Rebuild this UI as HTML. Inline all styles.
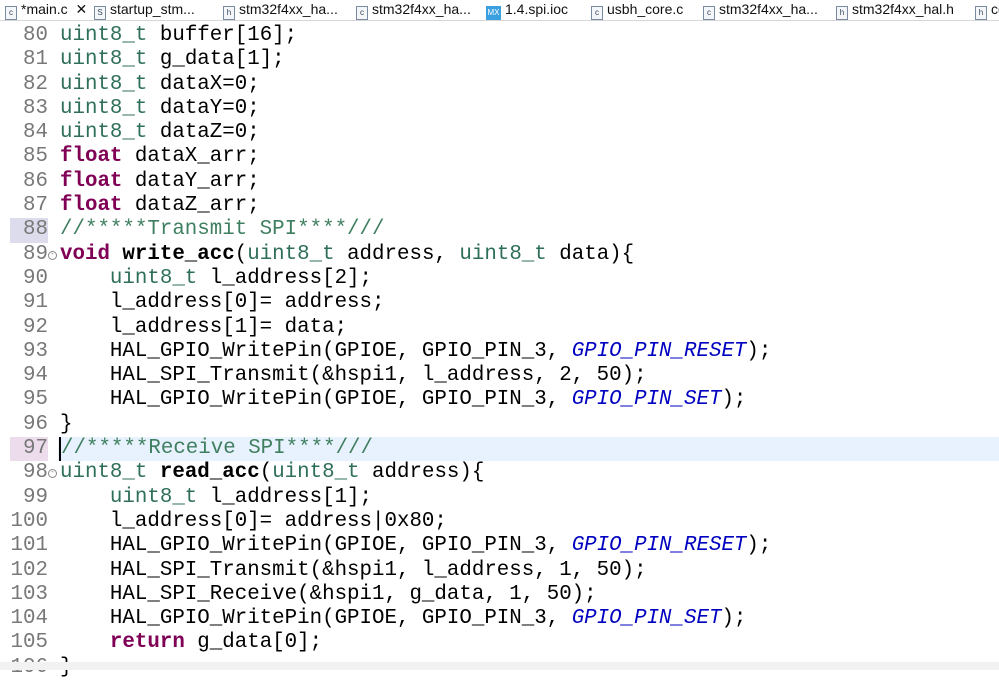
<!DOCTYPE html>
<html><head><style>
body{margin:0;width:999px;height:670px;overflow:hidden;background:#fff;font-family:"Liberation Sans",sans-serif;position:relative}
.tabs{position:absolute;left:0;top:0;width:999px;height:20px;background:#fff;border-bottom:1px solid #d6d6d6;font-size:14px;color:#111}
.tab{position:absolute;top:1px;white-space:nowrap}
.ic{display:inline-block;width:10px;height:12px;border:1px solid #7a8aa0;font-size:8px;line-height:11px;text-align:center;margin-right:4px;vertical-align:-1px;color:#345;background:#f4f6fa}
.mx{background:#3aa0e0;color:#fff;border-color:#3aa0e0;width:13px}
.ed{position:absolute;left:0;top:24px;width:999px;font-family:"Liberation Mono",monospace;font-size:20.8px}
.r{height:24.3px;line-height:24.3px;white-space:pre;position:relative}
.n{position:absolute;left:0;width:48px;text-align:right;color:#787878}
.c{position:absolute;left:60px}
.t{color:#2f6f5a}.k{color:#7f0055;font-weight:bold}.f{font-weight:bold;color:#000}.cm{color:#3f7f5f}.m{color:#0000c0;font-style:italic}
.fold{position:absolute;left:48px;top:8px;width:7px;height:7px;border:1px solid #888;border-radius:50%;font-size:7px;line-height:6px;text-align:center;color:#666}
</style></head><body>
<div class="tabs">
<span class="tab" style="left:5px"><span class="ic">c</span>*main.c &nbsp;✕</span>
<span class="tab" style="left:94px"><span class="ic">S</span>startup_stm...</span>
<span class="tab" style="left:223px"><span class="ic">h</span>stm32f4xx_ha...</span>
<span class="tab" style="left:356px"><span class="ic">c</span>stm32f4xx_ha...</span>
<span class="tab" style="left:486px"><span class="ic mx">MX</span>1.4.spi.ioc</span>
<span class="tab" style="left:591px"><span class="ic">c</span>usbh_core.c</span>
<span class="tab" style="left:703px"><span class="ic">c</span>stm32f4xx_ha...</span>
<span class="tab" style="left:836px"><span class="ic">h</span>stm32f4xx_hal.h</span>
<span class="tab" style="left:975px"><span class="ic">h</span>co</span>
</div>
<div class="ed">
<div class="r"><span class="n">80</span><span class="c"><span class="t">uint8_t</span> buffer[16];</span></div>
<div class="r"><span class="n">81</span><span class="c"><span class="t">uint8_t</span> g_data[1];</span></div>
<div class="r"><span class="n">82</span><span class="c"><span class="t">uint8_t</span> dataX=0;</span></div>
<div class="r"><span class="n">83</span><span class="c"><span class="t">uint8_t</span> dataY=0;</span></div>
<div class="r"><span class="n">84</span><span class="c"><span class="t">uint8_t</span> dataZ=0;</span></div>
<div class="r"><span class="n">85</span><span class="c"><span class="k">float</span> dataX_arr;</span></div>
<div class="r"><span class="n">86</span><span class="c"><span class="k">float</span> dataY_arr;</span></div>
<div class="r"><span class="n">87</span><span class="c"><span class="k">float</span> dataZ_arr;</span></div>
<div class="r"><span class="n" style="background:#dcdcec;left:10px;width:38px">88</span><span class="c cm">//*****Transmit SPI****///</span></div>
<div class="r"><span class="n">89</span><span class="fold">-</span><span class="c"><span class="k">void</span> <span class="f">write_acc</span>(<span class="t">uint8_t</span> address, <span class="t">uint8_t</span> data){</span></div>
<div class="r"><span class="n">90</span><span class="c">    <span class="t">uint8_t</span> l_address[2];</span></div>
<div class="r"><span class="n">91</span><span class="c">    l_address[0]= address;</span></div>
<div class="r"><span class="n">92</span><span class="c">    l_address[1]= data;</span></div>
<div class="r"><span class="n">93</span><span class="c">    HAL_GPIO_WritePin(GPIOE, GPIO_PIN_3, <span class="m">GPIO_PIN_RESET</span>);</span></div>
<div class="r"><span class="n">94</span><span class="c">    HAL_SPI_Transmit(&amp;hspi1, l_address, 2, 50);</span></div>
<div class="r"><span class="n">95</span><span class="c">    HAL_GPIO_WritePin(GPIOE, GPIO_PIN_3, <span class="m">GPIO_PIN_SET</span>);</span></div>
<div class="r"><span class="n">96</span><span class="c">}</span></div>
<div class="r" style="background:linear-gradient(90deg,#fff 58px,#e8f2fe 58px)"><span class="n" style="background:#ecdcec;left:10px;width:38px">97</span><span class="c cm" style="border-left:2px solid #000;margin-left:-1px">//*****Receive SPI****///</span></div>
<div class="r"><span class="n">98</span><span class="fold">-</span><span class="c"><span class="t">uint8_t</span> <span class="f">read_acc</span>(<span class="t">uint8_t</span> address){</span></div>
<div class="r"><span class="n">99</span><span class="c">    <span class="t">uint8_t</span> l_address[1];</span></div>
<div class="r"><span class="n">100</span><span class="c">    l_address[0]= address|0x80;</span></div>
<div class="r"><span class="n">101</span><span class="c">    HAL_GPIO_WritePin(GPIOE, GPIO_PIN_3, <span class="m">GPIO_PIN_RESET</span>);</span></div>
<div class="r"><span class="n">102</span><span class="c">    HAL_SPI_Transmit(&amp;hspi1, l_address, 1, 50);</span></div>
<div class="r"><span class="n">103</span><span class="c">    HAL_SPI_Receive(&amp;hspi1, g_data, 1, 50);</span></div>
<div class="r"><span class="n">104</span><span class="c">    HAL_GPIO_WritePin(GPIOE, GPIO_PIN_3, <span class="m">GPIO_PIN_SET</span>);</span></div>
<div class="r"><span class="n">105</span><span class="c">    <span class="k">return</span> g_data[0];</span></div>
<div class="r"><span class="n">106</span><span class="c">}</span></div>
</div>
<div style="position:absolute;left:0;top:662px;width:999px;height:8px;background:#f2f2f2"></div>
</body></html>
